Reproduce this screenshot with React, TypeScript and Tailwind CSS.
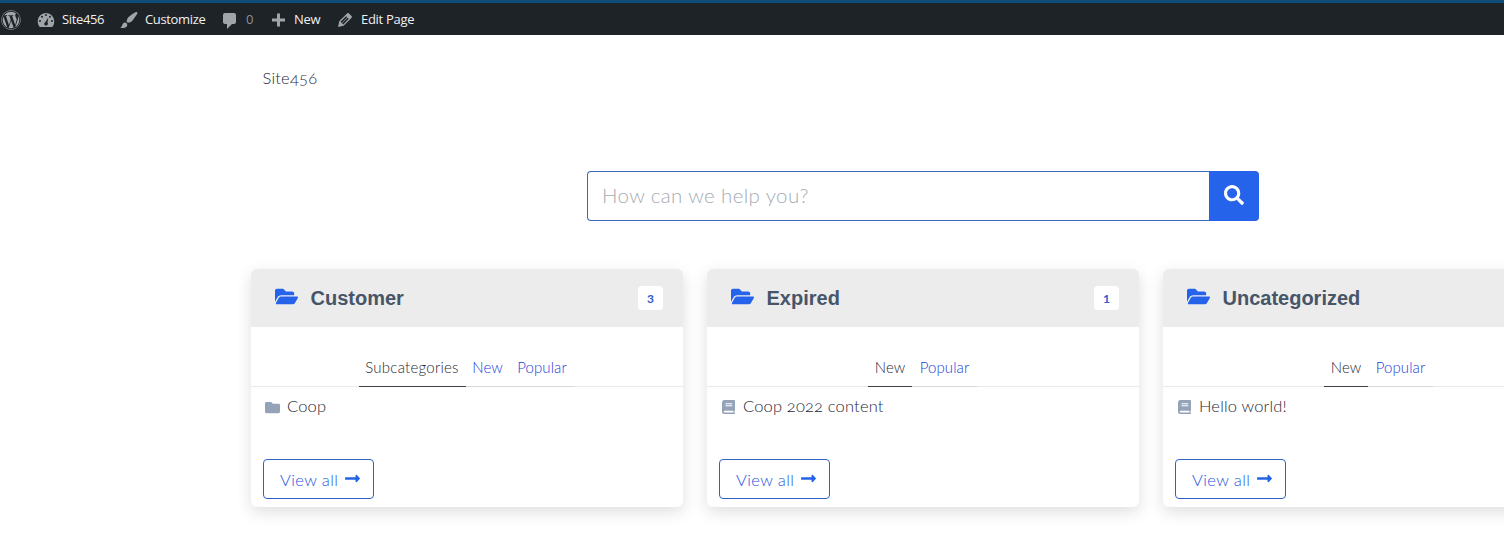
import React from "react";
import { FaFolder, FaFolderOpen, FaLongArrowAltRight, FaSearch, FaWordpress } from "react-icons/fa";

const light = "font-['Lato',sans-serif] font-light [font-feature-settings:'onum']";

function DashIcon({ d, className = "" }: { d: string; className?: string }) {
  return (
    <svg viewBox="0 0 20 20" fillRule="evenodd" className={`size-5 shrink-0 fill-[#a0a5aa] ${className}`}>
      <path d={d} />
    </svg>
  );
}

const icons = {
  dashboard:
    "M3.76 17h12.48c1.34-1.63 2.01-3.5 2.01-5.6C18.25 6.76 14.56 3 10 3S1.75 6.76 1.75 11.4c0 2.1.67 3.97 2.01 5.6zM9 5a1 1 0 1 0 2 0a1 1 0 1 0-2 0zM5 6.700a1 1 0 1 0 2 0a1 1 0 1 0-2 0zM13 6.700a1 1 0 1 0 2 0a1 1 0 1 0-2 0zM3 11a1 1 0 1 0 2 0a1 1 0 1 0-2 0zM15 11a1 1 0 1 0 2 0a1 1 0 1 0-2 0zM12.400 7.500L11.500 12.200C12.600 13.700 11.700 15.500 10 15.500S7.600 13.300 9.200 12.200z",
  brush:
    "M18.33 3.57s.27-.8-.31-1.36c-.53-.52-1.22-.24-1.22-.24-.61.3-5.76 3.47-7.67 5.57-.86.96-2.06 3.79-1.09 4.82.92.98 3.96-.17 4.79-1 2.06-2.06 5.21-7.17 5.5-7.79zM1.4 17.65c2.37-1.56 1.46-3.41 3.23-4.64.93-.65 2.22-.62 3.08.29.63.67.8 2.57-.16 3.46-1.57 1.45-4 1.55-6.15.89z",
  comment:
    "M5 2h9c1.1 0 2 .9 2 2v7c0 1.1-.9 2-2 2h-2l-5 5v-5H5c-1.1 0-2-.9-2-2V4c0-1.1.9-2 2-2z",
  plus: "M17 8.500v3h-5v5H9v-5H4v-3h5v-5h3v5h5z",
  edit: "M13.89 3.39l2.71 2.72c.46.46.42 1.24.03 1.64l-8.01 8.02-5.56 1.16 1.16-5.58s7.6-7.63 7.99-8.03c.39-.39 1.22-.39 1.68.07zm-2.73 2.79l-5.59 5.61 1.11 1.11 5.54-5.65zm-2.97 8.23l5.58-5.6-1.07-1.08-5.59 5.6z",
};

function AdminBar() {
  return (
    <header className="flex h-[35px] items-center border-t-3 border-[#0f4c7a] bg-[#1d2327] pt-px font-['Open_Sans',sans-serif] text-[13px] text-[#f0f0f1]">
      <div className="w-9 pl-px">
        <FaWordpress className="size-5 text-[#a0a5aa]" />
      </div>
      <a className="flex w-[83px] items-center gap-1.5">
        <DashIcon d={icons.dashboard} />
        <span className="tracking-[-0.35px]">Site456</span>
      </a>
      <a className="flex w-[101px] items-center gap-1.5">
        <DashIcon d={icons.brush} />
        <span className="tracking-[-0.35px]">Customize</span>
      </a>
      <a className="flex w-12 items-center gap-1.5">
        <DashIcon d={icons.comment} className="translate-y-px" />
        <span className="text-[#8c9196]">0</span>
      </a>
      <a className="flex w-[67px] items-center gap-1.5">
        <DashIcon d={icons.plus} />
        <span className="tracking-[-0.35px]">New</span>
      </a>
      <a className="flex items-center gap-1.5">
        <DashIcon d={icons.edit} />
        <span className="tracking-[-0.3px]">Edit Page</span>
      </a>
    </header>
  );
}

function BookIcon() {
  return (
    <svg viewBox="0 0 13 14" className="h-3.5 w-[13px] shrink-0">
      <path fill="#94a3b8" d="M2.500 0H12.300Q13 0 13 .7V10Q13 10.500 12.500 10.700V13H13V14H2.500Q0 14 0 11.500V2.500Q0 0 2.500 0Z" />
      <path fill="#fff" d="M3.500 3.300H10.300V4.200H3.500ZM3.500 5.300H10.300V6.200H3.500ZM2.600 10.800H11.400V12.400H2.600Q1.800 12.400 1.800 11.600T2.600 10.800Z" />
    </svg>
  );
}

type Category = { title: string; count?: string; tabs: string[]; item: string; folder?: boolean };

const categories: Category[] = [
  { title: "Customer", count: "3", tabs: ["Subcategories", "New", "Popular"], item: "Coop", folder: true },
  { title: "Expired", count: "1", tabs: ["New", "Popular"], item: "Coop 2022 content" },
  { title: "Uncategorized", tabs: ["New", "Popular"], item: "Hello world!" },
];

const tabStyle: Record<string, string> = {
  Subcategories: "w-[107px] tracking-[0.24px]",
  New: "w-11",
  Popular: "w-[65px] tracking-[0.1px]",
};

function Card({ title, count, tabs, item, folder }: Category) {
  return (
    <section className="h-[238px] w-[432px] shrink-0 overflow-hidden rounded-md bg-white shadow-[0_5px_16px_rgba(0,0,0,0.13)]">
      <div className="flex h-[58px] items-center bg-[#ececec] pr-5 pl-[23.5px]">
        <FaFolderOpen className="h-[21px] w-[23px] -translate-y-0.5 text-[#2563eb]" />
        <h2 className="ml-[13px] font-['Liberation_Sans',sans-serif] text-xl font-bold text-[#475569]">{title}</h2>
        {count && (
          <span className="ml-auto flex h-6 w-[25px] items-center justify-center rounded bg-white pt-0.5 font-['Lato',sans-serif] text-xs font-bold text-[#2f5bd0]">
            {count}
          </span>
        )}
      </div>
      <div className="flex h-[60px] items-end justify-center border-b border-[#e9eaec] pr-px">
        {tabs.map((tab, i) => (
          <span
            key={tab}
            className={`-mb-px flex h-[37px] items-center justify-center border-b pb-0.5 text-[15px] whitespace-nowrap ${light} ${tabStyle[tab]} ${
              i === 0 ? "border-[#404048] text-[#1f2937]" : "border-[#d8d9dc] text-[#1e40d8]"
            }`}
          >
            {tab}
          </span>
        ))}
      </div>
      <div className={`flex h-10 items-center pl-3.5 text-[16.5px] tracking-[0.17px] text-[#1f2937] ${light}`}>
        {folder ? <FaFolder className="mr-[7px] size-[15px] text-[#94a3b8]" /> : <span className="mr-2 ml-px"><BookIcon /></span>}
        <span className="-translate-y-px">{item}</span>
      </div>
      <a className={`mt-8 ml-3 flex h-10 w-[111px] items-center rounded border border-[#2f62c4] pl-4 text-[16.5px] text-[#1d55e0] ${light}`}>
        <span className="w-[58px] pt-0.5 tracking-[0.4px] whitespace-nowrap">View all</span>
        <FaLongArrowAltRight className="ml-[7px] h-[17px] w-[15px] -translate-y-px text-[#2563eb]" />
      </a>
    </section>
  );
}

export default function App() {
  return (
    <div className="h-[552px] overflow-hidden bg-white">
      <AdminBar />
      <main className="pl-[251px]">
        <div className={`ml-[11.5px] pt-[31px] text-[16.5px] leading-6 tracking-[0.2px] text-[#1f2937] ${light}`}>Site456</div>
        <form className="mt-[81px] ml-[336px] flex h-[50px] w-[672px]">
          <div className={`flex flex-1 items-center rounded-l border border-r-0 border-[#3568b8] pb-0.5 pl-3.5 text-[20.5px] tracking-[0.36px] text-[#a4acb4] ${light}`}>
            How can we help you?
          </div>
          <button type="button" className="flex w-[50px] items-center justify-center rounded-r bg-[#2563eb] pr-px pb-0.5 text-white">
            <FaSearch className="size-5" />
          </button>
        </form>
        <div className="mt-12 flex gap-6">
          {categories.map((category) => (
            <Card key={category.title} {...category} />
          ))}
        </div>
      </main>
    </div>
  );
}
